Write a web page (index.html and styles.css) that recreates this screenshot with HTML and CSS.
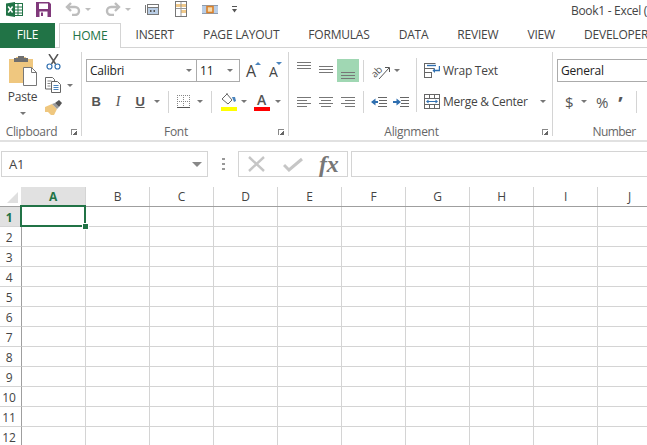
FILE: index.html
```html
<!DOCTYPE html>
<html lang="en">
<head>
    <meta charset="UTF-8">
    <title>Book1 - Excel</title>
    <link rel="stylesheet" href="styles.css">
</head>
<body>
    <div class="titlebar">
        <div class="qat">
            <svg class="qa-excel" width="17" height="15" viewBox="0 0 17 15"><rect x="7" y="1.5" width="9.5" height="12" fill="#fff" stroke="#217346"/><path d="M8 5h8M8 8h8M8 11h8M12 2v11" stroke="#217346"/><path d="M0 1.5 9 0v15L0 13.5z" fill="#217346"/><path d="M2.2 4.5 6.6 10.5M6.6 4.5 2.2 10.5" stroke="#fff" stroke-width="1.5"/></svg>
            <svg class="qa-save" width="15" height="15" viewBox="0 0 15 15"><path d="M0 0h13l2 2v13H0z" fill="#80397b"/><rect x="3" y="1.5" width="9" height="5.5" fill="#fff"/><rect x="3.5" y="9.5" width="8" height="5.5" fill="#fff"/><rect x="5" y="10.5" width="2" height="3.5" fill="#80397b"/></svg>
            <svg class="qa-undo" width="16" height="14" viewBox="0 0 16 14"><path d="M6 1 2 5l4 4" fill="none" stroke="#bdbdbd" stroke-width="2.4"/><path d="M2.5 5H10a4 4 0 0 1 0 8H7" fill="none" stroke="#bdbdbd" stroke-width="2.4"/></svg>
            <i class="arrow qa-arrow1"></i>
            <svg class="qa-redo" width="16" height="14" viewBox="0 0 16 14"><path d="M10 1l4 4-4 4" fill="none" stroke="#bdbdbd" stroke-width="2.4"/><path d="M13.5 5H6a4 4 0 0 0 0 8h3" fill="none" stroke="#bdbdbd" stroke-width="2.4"/></svg>
            <i class="arrow qa-arrow2"></i>
            <svg class="qa-form" width="14" height="11" viewBox="0 0 14 11"><path d="M.5 1v8" stroke="#777"/><rect x="2.5" y=".5" width="11" height="3" fill="#fff" stroke="#777"/><rect x="2.5" y="3.5" width="11" height="7" fill="#b9cde5" stroke="#777"/><path d="M5 7h1.500M8.500 7H10" stroke="#555" stroke-width="2"/></svg>
            <svg class="qa-freeze" width="12" height="16" viewBox="0 0 12 16"><rect x=".5" y=".5" width="11" height="15" fill="#fff" stroke="#777"/><rect x="1" y="3" width="10" height="3" fill="#f0c98a"/><rect x="6" y="9" width="5" height="3" fill="#f0c98a"/><path d="M6 1v14M1 7.500h10" stroke="#999"/></svg>
            <svg class="qa-merge" width="16" height="9" viewBox="0 0 16 9"><rect x="0" y="0" width="16" height="9" fill="#b9cde5"/><path d="M0 .5h16M0 8.500h16" stroke="#8c9cb0"/><rect x="5" y="1.500" width="6" height="6" fill="#f6dcb0" stroke="#d9802a" stroke-width="1.600"/></svg>
            <svg class="qa-more" width="5" height="7" viewBox="0 0 5 7"><path d="M0 .5h5" stroke="#555"/><path d="M0 3h5L2.500 6.500z" fill="#555"/></svg>
        </div>
        <div class="title">Book1 - Excel (</div>
    </div>

    <div class="tabs">
        <div class="tab-file">FILE</div>
        <div class="tab tab-active">HOME</div>
        <div class="tab">INSERT</div>
        <div class="tab">PAGE LAYOUT</div>
        <div class="tab">FORMULAS</div>
        <div class="tab">DATA</div>
        <div class="tab">REVIEW</div>
        <div class="tab">VIEW</div>
        <div class="tab">DEVELOPER</div>
    </div>

    <div class="ribbon">
        <section class="group group-clipboard">
            <div class="clip-body">
                <div class="paste">
                    <svg width="28" height="30" viewBox="0 0 28 30"><path d="M0 3h7V1h10v2h7v24H0z" fill="#efc77f"/><rect x="5" y="2" width="14" height="4" fill="#6f6f6f"/><rect x="9" y="0" width="6" height="3" fill="#6f6f6f"/><path d="M14.500 11.500h8l5 5v13h-13z" fill="#fff" stroke="#777"/><path d="M22.500 11.500v5h5" fill="none" stroke="#777"/></svg>
                    <span class="paste-label">Paste</span>
                    <i class="arrow"></i>
                </div>
                <div class="clip-tools">
                    <svg class="icon-cut" width="15" height="16" viewBox="0 0 15 16"><path d="M3 0 9.500 10M12 0 5.500 10" stroke="#555" stroke-width="1.500" fill="none"/><circle cx="3.500" cy="12.500" r="2.500" fill="#fff" stroke="#2f6fb0" stroke-width="1.200"/><circle cx="11.500" cy="12.500" r="2.500" fill="#fff" stroke="#2f6fb0" stroke-width="1.200"/></svg>
                    <div class="clip-copy">
                        <svg width="16" height="16" viewBox="0 0 16 16"><path d="M.5.500h7l2 2V12H.5z" fill="#fff" stroke="#666"/><path d="M6.500 4.500h6l3 3v8h-9z" fill="#fff" stroke="#666"/><path d="M2.500 4h4M2.500 6.500h3M2.500 9h3" stroke="#888"/><path d="M8.500 8.500h5M8.500 10.500h5M8.500 12.500h5" stroke="#4a84bd"/></svg>
                        <i class="arrow"></i>
                    </div>
                    <svg class="icon-brush" width="17" height="15" viewBox="0 0 17 15"><path d="M0 7l7-3 5 5-3 6H6L3 12H0z" fill="#efc77f"/><path d="M7 4l3-1 4 4-2 2z" fill="#9a9a9a"/><path d="M10 3l4-3 3 3-3 4z" fill="#555"/></svg>
                </div>
            </div>
            <div class="group-label">Clipboard<i class="launcher"></i></div>
        </section>

        <section class="group group-font">
            <div class="row row-first font-combos">
                <div class="combo combo-name"><span>Calibri</span><i class="arrow"></i></div>
                <div class="combo combo-size"><span>11</span><i class="arrow"></i></div>
                <div class="grow-btn"><span class="a-big">A</span><i class="caret-up"></i></div>
                <div class="grow-btn"><span class="a-small">A</span><i class="caret-down"></i></div>
            </div>
            <div class="row font-tools">
                <span class="fmt fmt-b">B</span>
                <span class="fmt fmt-i">I</span>
                <span class="fmt fmt-u">U</span>
                <i class="arrow"></i>
                <i class="vsep"></i>
                <svg class="icon-border" width="13" height="13" viewBox="0 0 13 13"><path d="M.5 0v13M6.500 0v13M12.500 0v13M0 .5h13M0 6.500h13" stroke="#888" stroke-dasharray="1 1"/><path d="M0 12.500h13" stroke="#555"/></svg>
                <i class="arrow"></i>
                <i class="vsep"></i>
                <div class="fill-btn">
                    <svg width="16" height="12" viewBox="0 0 16 12"><path d="M1 6 6 1l5 6-4 4z" fill="#fff" stroke="#666"/><path d="M6 1V0" stroke="#666"/><path d="M11 4h3l1 4-2 1z" fill="#4a84bd"/></svg>
                    <i class="swatch swatch-yellow"></i>
                </div>
                <i class="arrow"></i>
                <div class="color-btn">
                    <span class="color-a">A</span>
                    <i class="swatch swatch-red"></i>
                </div>
                <i class="arrow"></i>
            </div>
            <div class="group-label">Font<i class="launcher"></i></div>
        </section>

        <section class="group group-align">
            <div class="align-body">
                <div class="align-icons">
                    <div class="row row-first">
                        <div class="al-btn al-top"><svg width="14" height="7" viewBox="0 0 14 7"><path d="M0 .5h14M0 3.500h14M0 6.500h14" stroke="#777"/></svg></div>
                        <div class="al-btn al-mid"><svg width="14" height="7" viewBox="0 0 14 7"><path d="M0 .5h14M0 3.500h14M0 6.500h14" stroke="#777"/></svg></div>
                        <div class="al-btn al-bottom al-on"><svg width="14" height="7" viewBox="0 0 14 7"><path d="M0 .5h14M0 3.500h14M0 6.500h14" stroke="#777"/></svg></div>
                        <i class="vsep vsep-align"></i>
                        <svg class="icon-orient" width="20" height="18" viewBox="0 0 20 18"><text x="0" y="13" transform="rotate(-45 6 10)" class="orient-text">ab</text><path d="M8 17 18 6" stroke="#555"/><path d="M14 5.500h4.500V10" fill="none" stroke="#555"/></svg>
                        <i class="arrow"></i>
                    </div>
                    <div class="row">
                        <div class="al-btn"><svg width="14" height="10" viewBox="0 0 14 10"><path d="M0 .5h14M0 3.500h10M0 6.500h14M0 9.500h10" stroke="#777"/></svg></div>
                        <div class="al-btn"><svg width="14" height="10" viewBox="0 0 14 10"><path d="M0 .5h14M2 3.500h10M0 6.500h14M2 9.500h10" stroke="#777"/></svg></div>
                        <div class="al-btn"><svg width="14" height="10" viewBox="0 0 14 10"><path d="M0 .5h14M4 3.500h10M0 6.500h14M4 9.500h10" stroke="#777"/></svg></div>
                        <i class="vsep vsep-align"></i>
                        <svg class="icon-indent" width="16" height="10" viewBox="0 0 16 10"><path d="M7 .5h9M8 3.500h8M8 6.500h8M7 9.500h9" stroke="#666"/><path d="M1 5h6" stroke="#2f6fb0" stroke-width="2"/><path d="M4.500 1.500 0 5l4.500 3.500z" fill="#2f6fb0"/></svg>
                        <svg class="icon-indent" width="16" height="10" viewBox="0 0 16 10"><path d="M7 .5h9M8 3.500h8M8 6.500h8M7 9.500h9" stroke="#666"/><path d="M0 5h6" stroke="#2f6fb0" stroke-width="2"/><path d="M3.500 1.500 8 5 3.500 8.500z" fill="#2f6fb0"/></svg>
                    </div>
                </div>
                <i class="vsep-tall"></i>
                <div class="align-wide">
                    <div class="row row-first wide-btn">
                        <svg width="16" height="15" viewBox="0 0 16 15"><path d="M.5.500h11M.5 5.500h10M.5 9.500h7M.5 14.500h7M.5 0v15M7.500 9v6" stroke="#666" fill="none"/><path d="M3 2.500h9" stroke="#2f6fb0" stroke-width="1.400"/><path d="M15.500 3v4.500h-6" fill="none" stroke="#2f6fb0" stroke-width="1.400"/><path d="M11 5 8.500 7.500 11 10z" fill="#2f6fb0"/></svg>
                        <span>Wrap Text</span>
                    </div>
                    <div class="row wide-btn">
                        <svg width="16" height="15" viewBox="0 0 16 15"><rect x=".5" y=".5" width="15" height="14" fill="#fff" stroke="#666"/><path d="M0 4.500h16M0 10.500h16M5.500 0v4M10.500 0v4M5.500 11v4M10.500 11v4" stroke="#666"/><path d="M3 7.500h10" stroke="#2f6fb0"/><path d="M4.500 5.500 2 7.500l2.500 2zM11.500 5.500l2.500 2-2.500 2z" fill="#2f6fb0"/></svg>
                        <span>Merge &amp; Center</span>
                        <i class="arrow arrow-merge"></i>
                    </div>
                </div>
            </div>
            <div class="group-label">Alignment<i class="launcher"></i></div>
        </section>

        <section class="group group-number">
            <div class="row row-first">
                <div class="combo combo-format"><span>General</span></div>
            </div>
            <div class="row number-tools">
                <span class="num-dollar">$</span>
                <i class="arrow"></i>
                <span class="num-percent">%</span>
                <span class="num-comma">’</span>
                <i class="vsep"></i>
            </div>
            <div class="group-label">Number</div>
        </section>
    </div>

    <div class="formula-bar">
        <div class="name-box"><span>A1</span><i class="arrow arrow-dark"></i></div>
        <i class="grip"></i>
        <div class="fx-box">
            <svg width="17" height="16" viewBox="0 0 17 16"><path d="M1 1l15 14M16 1 1 15" stroke="#c6c6c6" stroke-width="2.400"/></svg>
            <svg width="20" height="15" viewBox="0 0 20 15"><path d="M1 8l5 5L19 2" fill="none" stroke="#c6c6c6" stroke-width="3"/></svg>
            <span class="fx-label">fx</span>
        </div>
        <div class="formula-input"></div>
    </div>

    <div class="sheet">
        <div class="col-heads">
            <div class="corner"><i></i></div>
            <div class="col col-on">A</div>
            <div class="col">B</div>
            <div class="col">C</div>
            <div class="col">D</div>
            <div class="col">E</div>
            <div class="col">F</div>
            <div class="col">G</div>
            <div class="col">H</div>
            <div class="col">I</div>
            <div class="col">J</div>
        </div>
        <div class="sheet-row"><div class="row-head row-on">1</div><div class="cells"></div></div>
        <div class="sheet-row"><div class="row-head">2</div><div class="cells"></div></div>
        <div class="sheet-row"><div class="row-head">3</div><div class="cells"></div></div>
        <div class="sheet-row"><div class="row-head">4</div><div class="cells"></div></div>
        <div class="sheet-row"><div class="row-head">5</div><div class="cells"></div></div>
        <div class="sheet-row"><div class="row-head">6</div><div class="cells"></div></div>
        <div class="sheet-row"><div class="row-head">7</div><div class="cells"></div></div>
        <div class="sheet-row"><div class="row-head">8</div><div class="cells"></div></div>
        <div class="sheet-row"><div class="row-head">9</div><div class="cells"></div></div>
        <div class="sheet-row"><div class="row-head">10</div><div class="cells"></div></div>
        <div class="sheet-row"><div class="row-head">11</div><div class="cells"></div></div>
        <div class="sheet-row"><div class="row-head">12</div><div class="cells"></div></div>
        <div class="selection"><i></i></div>
    </div>
</body>
</html>
```

FILE: styles.css
```css
html, body {
    margin: 0;
    height: 100%;
    overflow: hidden;
}
body {
    width: 647px;
    height: 445px;
    background-color: #fff;
    color: #444;
    font-family: "Open Sans", "Noto Sans", sans-serif;
    font-size: 12px;
    letter-spacing: -0.2px;
}
i {
    display: block;
}
svg {
    display: block;
    flex: none;
}
.arrow {
    flex: none;
    width: 0;
    height: 0;
    border-left: 3px solid transparent;
    border-right: 3px solid transparent;
    border-top: 3px solid #777;
}
.arrow-dark {
    border-left-width: 5px;
    border-right-width: 5px;
    border-top-width: 5px;
}

/* title bar */
.titlebar {
    height: 23px;
    display: flex;
    position: relative;
}
.qat {
    display: flex;
    align-items: center;
    height: 18px;
    padding-left: 6px;
}
.qa-save { margin-left: 13px; }
.qa-undo { margin-left: 14px; }
.qa-arrow1 { margin-left: 4px; border-top-color: #bdbdbd; }
.qa-redo { margin-left: 14px; }
.qa-arrow2 { margin-left: 4px; border-top-color: #bdbdbd; }
.qa-form { margin-left: 14px; }
.qa-freeze { margin-left: 16px; }
.qa-merge { margin-left: 15px; }
.qa-more { margin-left: 14px; }
.title {
    position: absolute;
    left: 571px;
    top: 2px;
    white-space: nowrap;
    font-size: 12px;
    line-height: 18px;
    letter-spacing: -0.3px;
}

/* tabs */
.tabs {
    display: flex;
    height: 25px;
    box-sizing: border-box;
    border-bottom: 1px solid #d4d4d4;
    white-space: nowrap;
    font-size: 12px;
}
.tab-file {
    flex: none;
    width: 55px;
    height: 25px;
    background-color: #217346;
    color: #fff;
    text-align: center;
    line-height: 24px;
    margin-right: 4px;
}
.tab {
    flex: none;
    padding: 0 14.5px;
    line-height: 24px;
}
.tab-active {
    height: 25px;
    box-sizing: border-box;
    width: 62px;
    padding: 0;
    text-align: center;
    background-color: #fff;
    color: #217346;
    border: 1px solid #d4d4d4;
    border-bottom: 0;
    line-height: 23px;
}

/* ribbon */
.ribbon {
    display: flex;
    height: 94px;
    box-sizing: border-box;
    padding-top: 4px;
    border-bottom: 2px solid #e1e1e1;
    overflow: hidden;
}
.group {
    flex: none;
    position: relative;
    display: flex;
    flex-direction: column;
    height: 84px;
    box-sizing: border-box;
    border-right: 1px solid #d4d4d4;
}
.group-clipboard { width: 82px; }
.group-font { width: 207px; }
.group-align { width: 264px; }
.group-number { width: 120px; border-right: 0; }
.group-label {
    position: absolute;
    left: 0;
    right: 0;
    top: 72px;
    padding-right: 18px;
    text-align: center;
    font-size: 12px;
    line-height: 16px;
    letter-spacing: -0.3px;
    color: #666;
}
.group-number .group-label {
    padding-right: 0;
    padding-left: 2px;
    box-sizing: border-box;
    letter-spacing: -0.6px;
}
.launcher {
    position: absolute;
    right: 4px;
    top: 5px;
    width: 5px;
    height: 5px;
    border-left: 1px solid #888;
    border-top: 1px solid #888;
    background: linear-gradient(135deg, transparent 55%, #666 55%);
}
.row {
    display: flex;
    align-items: center;
    height: 23px;
}
.row-first {
    margin-top: 7px;
    margin-bottom: 8px;
}

/* clipboard */
.clip-body {
    display: flex;
}
.paste {
    width: 45px;
    display: flex;
    flex-direction: column;
    align-items: center;
    padding-top: 4px;
}
.paste-label {
    margin-top: 2px;
    line-height: 18px;
    font-size: 12px;
}
.paste .arrow {
    margin-top: 6px;
}
.clip-tools {
    display: flex;
    flex-direction: column;
    gap: 7px;
    padding-top: 2px;
}
.icon-cut { margin-left: 1px; }
.clip-copy {
    display: flex;
    align-items: center;
    gap: 6px;
}

/* font */
.font-combos { padding-left: 4px; }
.combo {
    box-sizing: border-box;
    height: 23px;
    border: 1px solid #ababab;
    display: flex;
    align-items: center;
    justify-content: space-between;
    padding: 0 4px 0 3px;
    font-size: 12px;
    color: #222;
}
.combo-name { width: 111px; }
.combo-size { width: 44px; margin-left: -1px; padding-right: 6px; }
.combo-format { width: 110px; margin-left: 4px; }
.grow-btn {
    position: relative;
    width: 23px;
    height: 23px;
    box-sizing: border-box;
    padding-left: 6px;
}
.a-big { font-size: 16px; line-height: 24px; }
.a-small { font-size: 14px; line-height: 25px; }
.caret-up, .caret-down {
    position: absolute;
    top: 3px;
    width: 0;
    height: 0;
    border-left: 3px solid transparent;
    border-right: 3px solid transparent;
}
.caret-up { right: 2px; border-bottom: 3px solid #4a84bd; }
.caret-down { right: 4px; border-top: 3px solid #4a84bd; }
.font-tools { padding-left: 3px; }
.fmt {
    width: 22px;
    text-align: center;
    font-size: 13px;
    color: #555;
}
.fmt-b { font-weight: 700; font-family: "Liberation Sans", sans-serif; }
.fmt-i { font-style: italic; font-family: "Liberation Serif", serif; font-size: 14px; }
.fmt-u { text-decoration: underline; font-weight: 700; font-family: "Liberation Sans", sans-serif; }
.font-tools .fmt-u + .arrow { margin-left: 3px; }
.font-tools .vsep { margin: 0 8px; }
.vsep {
    flex: none;
    width: 1px;
    height: 22px;
    background-color: #d4d4d4;
}
.icon-border + .arrow { margin-left: 7px; }
.fill-btn, .color-btn {
    display: flex;
    flex-direction: column;
    align-items: center;
    width: 17px;
}
.swatch {
    width: 16px;
    height: 4px;
}
.swatch-yellow { background-color: #ffff00; margin-top: 2px; }
.swatch-red { background-color: #ff0000; }
.fill-btn + .arrow { margin-left: 4px; }
.color-btn { margin-left: 6px; }
.color-a {
    font-size: 14px;
    line-height: 15px;
    font-weight: 600;
    color: #555;
}
.color-btn + .arrow { margin-left: 5px; }

/* alignment */
.align-body {
    display: flex;
}
.align-icons {
    padding-left: 4px;
    width: 123px;
}
.al-btn {
    flex: none;
    width: 22px;
    height: 23px;
    display: flex;
    align-items: center;
    justify-content: center;
}
.al-top { align-items: flex-start; padding-top: 3px; box-sizing: border-box; }
.al-mid { padding-bottom: 2px; box-sizing: border-box; }
.al-bottom { align-items: flex-end; padding-bottom: 3px; box-sizing: border-box; }
.al-on { background-color: #a0d7b3; }
.vsep-align { margin: 0 7px 0 4px; }
.orient-text {
    font-family: "Open Sans", sans-serif;
    font-size: 10px;
    fill: #555;
}
.icon-orient + .arrow { margin-left: 3px; }
.icon-indent + .icon-indent { margin-left: 6px; }
.vsep-tall {
    flex: none;
    width: 1px;
    height: 54px;
    margin-top: 6px;
    background-color: #d4d4d4;
}
.align-wide {
    padding-left: 7px;
}
.wide-btn {
    gap: 3px;
    font-size: 12px;
    white-space: nowrap;
    letter-spacing: -0.25px;
}
.arrow-merge { margin-left: 9px; }

/* number */
.number-tools {
    padding-left: 12px;
    color: #555;
}
.num-dollar { font-size: 15px; width: 10px; }
.number-tools .arrow { margin-left: 6px; }
.num-percent { font-size: 15px; margin-left: 9px; }
.num-comma {
    font-size: 20px;
    font-weight: 700;
    margin-left: 10px;
    line-height: 20px;
    padding-top: 4px;
}
.number-tools .vsep { margin-left: 14px; }

/* formula bar */
.formula-bar {
    display: flex;
    height: 45px;
    box-sizing: border-box;
    padding: 9px 0 0 1px;
}
.name-box, .fx-box, .formula-input {
    box-sizing: border-box;
    flex: none;
    height: 26px;
    border: 1px solid #d4d4d4;
}
.name-box {
    width: 207px;
    display: flex;
    align-items: center;
    justify-content: space-between;
    padding: 0 5px 0 7px;
    font-size: 13px;
}
.name-box .arrow { border-top-color: #888; }
.grip {
    flex: none;
    width: 3px;
    height: 12px;
    margin: 7px 13px 0 14px;
    background: repeating-linear-gradient(to bottom, #999 0 2px, transparent 2px 5px);
}
.fx-box {
    width: 110px;
    display: flex;
    align-items: center;
    padding-left: 9px;
    gap: 18px;
}
.fx-label {
    font-family: "Liberation Serif", serif;
    font-style: italic;
    font-weight: 700;
    font-size: 24px;
    line-height: 20px;
    color: #777;
    margin-left: -2px;
}
.formula-input {
    width: 300px;
    margin-left: 3px;
}

/* sheet */
.sheet {
    position: relative;
    height: 259px;
    overflow: hidden;
}
.col-heads {
    display: flex;
    height: 20px;
    box-sizing: border-box;
    border-bottom: 1px solid #9f9f9f;
}
.corner {
    flex: none;
    width: 21px;
    box-sizing: border-box;
    padding: 5px 0 0 7px;
}
.corner i {
    width: 0;
    height: 0;
    border-left: 11px solid transparent;
    border-bottom: 11px solid #dfdfdf;
}
.col {
    flex: none;
    width: 64px;
    box-sizing: border-box;
    border-right: 1px solid #d4d4d4;
    text-align: center;
    line-height: 20px;
    font-size: 12px;
}
.col-on {
    background-color: #e1e1e1;
    color: #217346;
    font-weight: 700;
    width: 65px;
}
.sheet-row {
    display: flex;
    height: 20px;
}
.row-head {
    flex: none;
    box-sizing: border-box;
    height: 20px;
    width: 22px;
    padding-right: 3px;
    border-bottom: 1px solid #d4d4d4;
    border-right: 1px solid #9f9f9f;
    text-align: center;
    line-height: 21px;
    font-size: 12px;
}
.row-on {
    background-color: #e1e1e1;
    color: #217346;
    font-weight: 700;
}
.cells {
    flex: 1;
    height: 20px;
    box-sizing: border-box;
    border-bottom: 1px solid #d4d4d4;
    background-image: repeating-linear-gradient(to right, transparent 0 63px, #d4d4d4 63px 64px);
}
.selection {
    position: absolute;
    left: 20px;
    top: 18px;
    width: 62px;
    height: 18px;
    border: 2px solid #217346;
}
.selection i {
    position: absolute;
    right: -5px;
    bottom: -5px;
    width: 5px;
    height: 5px;
    background-color: #217346;
    border: 1px solid #fff;
}
```
